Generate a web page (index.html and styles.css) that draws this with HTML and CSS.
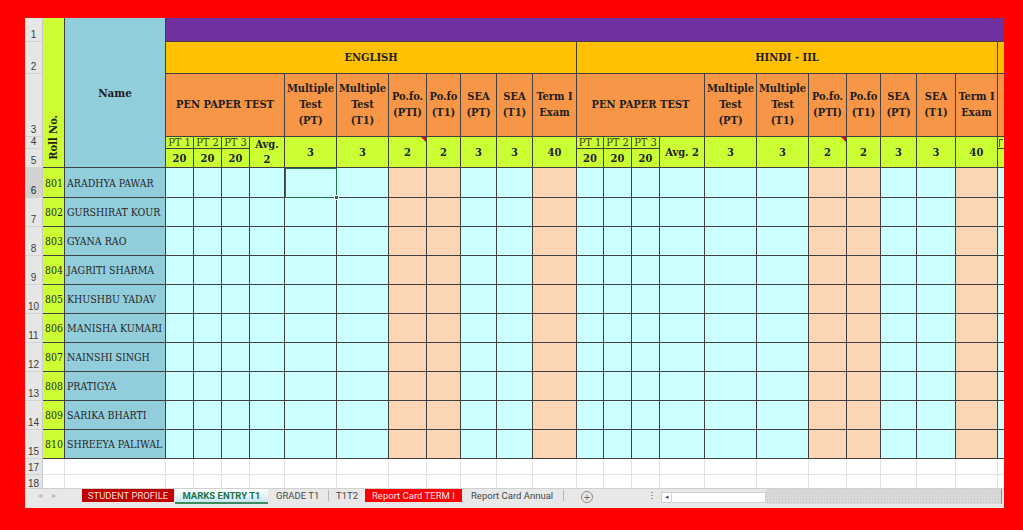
FILE: index.html
```html
<!DOCTYPE html>
<html lang="en">
<head>
<meta charset="utf-8">
<title>MARKS ENTRY T1</title>
<link rel="stylesheet" href="styles.css">
</head>
<body>
<div class="frame">
  <div class="sheet">
    <div class="grid">
      <table class="ws">
        <colgroup>
          <col class="w18"><col class="w22"><col class="w101">
          <col class="w28"><col class="w28"><col class="w28"><col class="w35"><col class="w52"><col class="w52"><col class="w38"><col class="w34"><col class="w36"><col class="w36"><col class="w44">
          <col class="w27"><col class="w28"><col class="w28"><col class="w45"><col class="w52"><col class="w52"><col class="w38"><col class="w34"><col class="w36"><col class="w39"><col class="w42">
          <col class="w28">
        </colgroup>
        <tr class="h1">
          <td class="rh">1</td>
          <td class="rollhd" rowspan="5"><span class="vt">Roll No.</span></td>
          <td class="namehd" rowspan="5">Name</td>
          <td class="purple" colspan="23"></td>
        </tr>
        <tr class="h2">
          <td class="rh">2</td>
          <td class="subj" colspan="11">ENGLISH</td>
          <td class="subj" colspan="11">HINDI - IIL</td>
          <td class="subj"></td>
        </tr>
        <tr class="h3">
          <td class="rh">3</td>
          <td class="hd" colspan="4">PEN PAPER TEST</td>
          <td class="hd">Multiple<br>Test<br>(PT)</td>
          <td class="hd">Multiple<br>Test<br>(T1)</td>
          <td class="hd">Po.fo.<br>(PTI)</td>
          <td class="hd">Po.fo<br>(T1)</td>
          <td class="hd">SEA<br>(PT)</td>
          <td class="hd">SEA<br>(T1)</td>
          <td class="hd">Term I<br>Exam</td>
          <td class="hd" colspan="4">PEN PAPER TEST</td>
          <td class="hd">Multiple<br>Test<br>(PT)</td>
          <td class="hd">Multiple<br>Test<br>(T1)</td>
          <td class="hd">Po.fo.<br>(PTI)</td>
          <td class="hd">Po.fo<br>(T1)</td>
          <td class="hd">SEA<br>(PT)</td>
          <td class="hd">SEA<br>(T1)</td>
          <td class="hd">Term I<br>Exam</td>
          <td class="hd"></td>
        </tr>
        <tr class="h4">
          <td class="rh">4</td>
          <td class="pt">PT 1</td><td class="pt">PT 2</td><td class="pt">PT 3</td>
          <td class="mx avg" rowspan="2">Avg.<br>2</td>
          <td class="mx" rowspan="2">3</td>
          <td class="mx" rowspan="2">3</td>
          <td class="mx noted" rowspan="2">2<span class="note"></span></td>
          <td class="mx" rowspan="2">2</td>
          <td class="mx" rowspan="2">3</td>
          <td class="mx" rowspan="2">3</td>
          <td class="mx" rowspan="2">40</td>
          <td class="pt">PT 1</td><td class="pt">PT 2</td><td class="pt">PT 3</td>
          <td class="mx" rowspan="2">Avg. 2</td>
          <td class="mx" rowspan="2">3</td>
          <td class="mx" rowspan="2">3</td>
          <td class="mx noted" rowspan="2">2<span class="note"></span></td>
          <td class="mx" rowspan="2">2</td>
          <td class="mx" rowspan="2">3</td>
          <td class="mx" rowspan="2">3</td>
          <td class="mx" rowspan="2">40</td>
          <td class="pt edge"><span class="stub"></span></td>
        </tr>
        <tr class="h5">
          <td class="rh">5</td>
          <td class="tw">20</td><td class="tw">20</td><td class="tw">20</td>
          <td class="tw">20</td><td class="tw">20</td><td class="tw">20</td>
          <td class="tw"></td>
        </tr>

        <tr class="h30">
          <td class="rh on">6</td><td class="roll">801</td><td class="nm">ARADHYA PAWAR</td>
          <td class="c"></td><td class="c"></td><td class="c"></td><td class="c"></td><td class="c sel"><span class="handle"></span></td><td class="c"></td><td class="p"></td><td class="p"></td><td class="c"></td><td class="c"></td><td class="p"></td>
          <td class="c"></td><td class="c"></td><td class="c"></td><td class="c"></td><td class="c"></td><td class="c"></td><td class="p"></td><td class="p"></td><td class="c"></td><td class="c"></td><td class="p"></td>
          <td class="c"></td>
        </tr>
        <tr class="h29">
          <td class="rh">7</td><td class="roll">802</td><td class="nm">GURSHIRAT KOUR</td>
          <td class="c"></td><td class="c"></td><td class="c"></td><td class="c"></td><td class="c"></td><td class="c"></td><td class="p"></td><td class="p"></td><td class="c"></td><td class="c"></td><td class="p"></td>
          <td class="c"></td><td class="c"></td><td class="c"></td><td class="c"></td><td class="c"></td><td class="c"></td><td class="p"></td><td class="p"></td><td class="c"></td><td class="c"></td><td class="p"></td>
          <td class="c"></td>
        </tr>
        <tr class="h29">
          <td class="rh">8</td><td class="roll">803</td><td class="nm">GYANA RAO</td>
          <td class="c"></td><td class="c"></td><td class="c"></td><td class="c"></td><td class="c"></td><td class="c"></td><td class="p"></td><td class="p"></td><td class="c"></td><td class="c"></td><td class="p"></td>
          <td class="c"></td><td class="c"></td><td class="c"></td><td class="c"></td><td class="c"></td><td class="c"></td><td class="p"></td><td class="p"></td><td class="c"></td><td class="c"></td><td class="p"></td>
          <td class="c"></td>
        </tr>
        <tr class="h29">
          <td class="rh">9</td><td class="roll">804</td><td class="nm">JAGRITI SHARMA</td>
          <td class="c"></td><td class="c"></td><td class="c"></td><td class="c"></td><td class="c"></td><td class="c"></td><td class="p"></td><td class="p"></td><td class="c"></td><td class="c"></td><td class="p"></td>
          <td class="c"></td><td class="c"></td><td class="c"></td><td class="c"></td><td class="c"></td><td class="c"></td><td class="p"></td><td class="p"></td><td class="c"></td><td class="c"></td><td class="p"></td>
          <td class="c"></td>
        </tr>
        <tr class="h29">
          <td class="rh">10</td><td class="roll">805</td><td class="nm">KHUSHBU YADAV</td>
          <td class="c"></td><td class="c"></td><td class="c"></td><td class="c"></td><td class="c"></td><td class="c"></td><td class="p"></td><td class="p"></td><td class="c"></td><td class="c"></td><td class="p"></td>
          <td class="c"></td><td class="c"></td><td class="c"></td><td class="c"></td><td class="c"></td><td class="c"></td><td class="p"></td><td class="p"></td><td class="c"></td><td class="c"></td><td class="p"></td>
          <td class="c"></td>
        </tr>
        <tr class="h29">
          <td class="rh">11</td><td class="roll">806</td><td class="nm">MANISHA KUMARI</td>
          <td class="c"></td><td class="c"></td><td class="c"></td><td class="c"></td><td class="c"></td><td class="c"></td><td class="p"></td><td class="p"></td><td class="c"></td><td class="c"></td><td class="p"></td>
          <td class="c"></td><td class="c"></td><td class="c"></td><td class="c"></td><td class="c"></td><td class="c"></td><td class="p"></td><td class="p"></td><td class="c"></td><td class="c"></td><td class="p"></td>
          <td class="c"></td>
        </tr>
        <tr class="h29">
          <td class="rh">12</td><td class="roll">807</td><td class="nm">NAINSHI SINGH</td>
          <td class="c"></td><td class="c"></td><td class="c"></td><td class="c"></td><td class="c"></td><td class="c"></td><td class="p"></td><td class="p"></td><td class="c"></td><td class="c"></td><td class="p"></td>
          <td class="c"></td><td class="c"></td><td class="c"></td><td class="c"></td><td class="c"></td><td class="c"></td><td class="p"></td><td class="p"></td><td class="c"></td><td class="c"></td><td class="p"></td>
          <td class="c"></td>
        </tr>
        <tr class="h29">
          <td class="rh">13</td><td class="roll">808</td><td class="nm">PRATIGYA</td>
          <td class="c"></td><td class="c"></td><td class="c"></td><td class="c"></td><td class="c"></td><td class="c"></td><td class="p"></td><td class="p"></td><td class="c"></td><td class="c"></td><td class="p"></td>
          <td class="c"></td><td class="c"></td><td class="c"></td><td class="c"></td><td class="c"></td><td class="c"></td><td class="p"></td><td class="p"></td><td class="c"></td><td class="c"></td><td class="p"></td>
          <td class="c"></td>
        </tr>
        <tr class="h29">
          <td class="rh">14</td><td class="roll">809</td><td class="nm">SARIKA BHARTI</td>
          <td class="c"></td><td class="c"></td><td class="c"></td><td class="c"></td><td class="c"></td><td class="c"></td><td class="p"></td><td class="p"></td><td class="c"></td><td class="c"></td><td class="p"></td>
          <td class="c"></td><td class="c"></td><td class="c"></td><td class="c"></td><td class="c"></td><td class="c"></td><td class="p"></td><td class="p"></td><td class="c"></td><td class="c"></td><td class="p"></td>
          <td class="c"></td>
        </tr>
        <tr class="h29">
          <td class="rh">15</td><td class="roll">810</td><td class="nm">SHREEYA PALIWAL</td>
          <td class="c"></td><td class="c"></td><td class="c"></td><td class="c"></td><td class="c"></td><td class="c"></td><td class="p"></td><td class="p"></td><td class="c"></td><td class="c"></td><td class="p"></td>
          <td class="c"></td><td class="c"></td><td class="c"></td><td class="c"></td><td class="c"></td><td class="c"></td><td class="p"></td><td class="p"></td><td class="c"></td><td class="c"></td><td class="p"></td>
          <td class="c"></td>
        </tr>
        <tr class="h16 blank">
          <td class="rh">17</td>
          <td></td><td></td><td></td><td></td><td></td><td></td><td></td><td></td><td></td><td></td><td></td><td></td><td></td>
          <td></td><td></td><td></td><td></td><td></td><td></td><td></td><td></td><td></td><td></td><td></td><td></td>
        </tr>
        <tr class="h16 blank">
          <td class="rh">18</td>
          <td></td><td></td><td></td><td></td><td></td><td></td><td></td><td></td><td></td><td></td><td></td><td></td><td></td>
          <td></td><td></td><td></td><td></td><td></td><td></td><td></td><td></td><td></td><td></td><td></td><td></td>
        </tr>
      </table>
    </div>
    <div class="tabbar">
      <div class="nav"><span class="arr">&#9666;</span><span class="arr">&#9656;</span></div>
      <div class="tab darkred">STUDENT PROFILE</div>
      <div class="tab active">MARKS ENTRY T1</div>
      <div class="tab plain grade">GRADE T1</div>
      <i class="vsep"></i>
      <div class="tab plain t1t2">T1T2</div>
      <div class="tab red">Report Card TERM I</div>
      <div class="tab plain annual">Report Card Annual</div>
      <i class="vsep"></i>
      <div class="add">+</div>
      <div class="grip"></div>
      <div class="hscroll"><span class="sarr">&#9666;</span><span class="field"></span></div>
      <div class="track"></div>
    </div>
  </div>
</div>
</body>
</html>
```

FILE: styles.css
```css
* { box-sizing: border-box; }
html, body { margin: 0; padding: 0; }
body {
  background: #ff0000;
  width: 1023px;
  height: 530px;
  overflow: hidden;
}
.frame { padding: 18px 19px 22px 25px; }
.sheet {
  width: 979px;
  height: 490px;
  background: #ffffff;
  display: flex;
  flex-direction: column;
  overflow: hidden;
}
.grid { flex: none; height: 470px; overflow: hidden; }

/* worksheet table */
.ws {
  border-collapse: separate;
  border-spacing: 0;
  table-layout: fixed;
  width: 1001px;
  font-family: "DejaVu Serif Condensed", "DejaVu Serif", serif;
  font-stretch: condensed;
  color: #1e1e1e;
}
.w18 { width: 18px; } .w22 { width: 22px; } .w101 { width: 101px; }
.w27 { width: 27px; } .w28 { width: 28px; } .w34 { width: 34px; }
.w35 { width: 35px; } .w36 { width: 36px; } .w38 { width: 38px; }
.w39 { width: 39px; } .w42 { width: 42px; } .w44 { width: 44px; }
.w45 { width: 45px; } .w52 { width: 52px; }

.h1 { height: 24px; } .h2 { height: 32px; } .h3 { height: 63px; }
.h4 { height: 12px; } .h5 { height: 19px; }
.h30 { height: 30px; } .h29 { height: 29px; } .h16 { height: 16px; }

.ws td {
  padding: 0;
  border-right: 1px solid #404040;
  border-bottom: 1px solid #404040;
  overflow: hidden;
  white-space: nowrap;
  text-align: center;
  vertical-align: middle;
}

/* row headers */
.ws td.rh {
  background: #e6e6e6;
  border-right: 1px solid #c9c9c9;
  border-bottom: 1px solid #d3d3d3;
  font-family: "Liberation Sans", Arial, sans-serif;
  font-size: 10px;
  line-height: 10px;
  color: #404040;
  vertical-align: bottom;
  padding-bottom: 1px;
}
.ws td.rh.on { background: #d2d2d2; color: #222; }

/* header block */
.ws td.rollhd {
  background: #ccff33;
  vertical-align: bottom;
  padding-bottom: 3px;
}
.vt {
  display: inline-block;
  writing-mode: vertical-rl;
  transform: rotate(180deg);
  font-weight: bold;
  font-size: 11px;
  line-height: 12px;
}
.ws td.namehd {
  background: #92cddc;
  font-weight: bold;
  font-size: 11.5px;
}
.ws td.purple { background: #7030a0; border-right: none; }
.ws td.subj {
  background: #ffc000;
  font-weight: bold;
  font-size: 11px;
}
.ws td.hd {
  background: #f79646;
  font-weight: bold;
  font-size: 11px;
  line-height: 16px;
}
.ws td.pt {
  background: #ccff33;
  font-size: 11px;
  line-height: 11px;
  color: #3b3d1c;
  vertical-align: bottom;
}
.ws td.mx, .ws td.tw {
  background: #ccff33;
  font-weight: bold;
  font-size: 11px;
  line-height: 15px;
}
.ws td.edge { text-align: left; padding: 2px 0 0 1px; vertical-align: top; }
.stub {
  display: block;
  width: 4px;
  height: 8px;
  border-left: 1px solid #5a5a3a;
  border-top: 1px solid #5a5a3a;
}
.ws td.noted { position: relative; }
.note {
  position: absolute;
  top: 0;
  right: 0;
  width: 0;
  height: 0;
  border-left: 5px solid transparent;
  border-top: 5px solid #e60000;
}

/* data */
.ws td.roll {
  background: #ccff33;
  text-align: left;
  padding-left: 2px;
  font-size: 10.5px;
  color: #2a2a2a;
}
.ws td.nm {
  background: #92cddc;
  text-align: left;
  padding-left: 2px;
  font-size: 10.5px;
  color: #262626;
}
.ws td.c { background: #ccffff; }
.ws td.p { background: #fcd5b4; }
.ws td.sel {
  position: relative;
  overflow: visible;
  outline: 1px solid #217346;
  outline-offset: -1px;
}
.handle {
  position: absolute;
  right: -3px;
  bottom: -3px;
  width: 5px;
  height: 5px;
  background: #217346;
  border: 1px solid #ffffff;
  z-index: 2;
}

.blank td { background: #ffffff; border-right: 1px solid #e2e2e2; border-bottom: 1px solid #e2e2e2; }

/* sheet tabs */
.tabbar {
  flex: none;
  height: 20px;
  display: flex;
  align-items: flex-start;
  background: #e8e8e8;
  border-top: 1px solid #d0d0d0;
  font-family: Roboto, "Liberation Sans", sans-serif;
  font-size: 9.5px;
}
.nav {
  width: 57px;
  height: 13px;
  display: flex;
  align-items: center;
  padding-left: 13px;
  gap: 10px;
}
.arr { color: #b9b9b9; font-size: 8px; line-height: 10px; }
.tab {
  height: 13px;
  line-height: 13px;
  white-space: nowrap;
  color: #474747;
}
.tab.darkred {
  width: 92px;
  background: #c00000;
  color: #ffdede;
  text-align: center;
}
.tab.active {
  width: 93px;
  margin-left: 1px;
  height: 15px;
  background: linear-gradient(#ffffff, #c9e7f4);
  border-bottom: 2px solid #3c8c5e;
  color: #217346;
  font-weight: bold;
  text-align: center;
}
.tab.grade { width: 60px; padding-left: 8px; }
.tab.t1t2 { width: 36px; padding-left: 7px; }
.tab.red {
  width: 97px;
  background: #ff0000;
  color: #ffe6e6;
  padding-left: 7px;
}
.tab.annual { width: 101px; padding-left: 9px; }
.vsep {
  display: block;
  width: 1px;
  height: 11px;
  margin-top: 1px;
  background: #b8b8b8;
}
.add {
  width: 12px;
  height: 12px;
  margin: 2px 0 0 17px;
  border: 1px solid #8a8a8a;
  border-radius: 50%;
  color: #6a6a6a;
  font-family: "Liberation Sans", sans-serif;
  font-size: 11px;
  line-height: 10px;
  text-align: center;
}
.grip {
  width: 2px;
  height: 9px;
  margin: 3px 0 0 58px;
  background: repeating-linear-gradient(#9a9a9a 0 1px, transparent 1px 3px);
}
.hscroll {
  width: 105px;
  height: 11px;
  margin: 3px 0 0 8px;
  display: flex;
  border: 1px solid #cfcfcf;
  background: #ffffff;
}
.sarr {
  width: 10px;
  border-right: 1px solid #d6d6d6;
  font-size: 7px;
  line-height: 9px;
  color: #555;
  text-align: center;
}
.field { flex: 1; }
.track {
  width: 236px;
  height: 15px;
  background-color: #d9d9d9;
  background-image: radial-gradient(#c8c8c8 0.6px, transparent 0.8px);
  background-size: 3px 3px;
  border-right: 1px solid #8c8c8c;
}
```
